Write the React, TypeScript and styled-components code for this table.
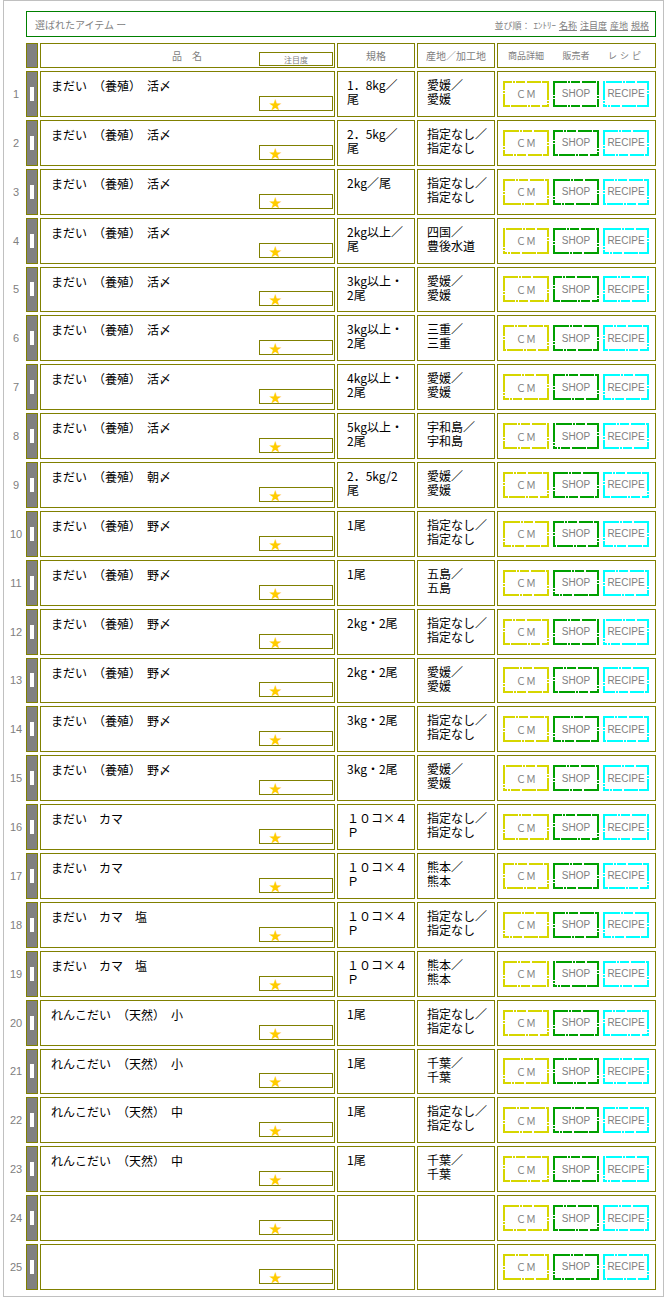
import styled, { createGlobalStyle } from 'styled-components';

const OLIVE = '#808000';
const GREY = '#808080';
const JP = "'Noto Sans CJK JP', 'Liberation Sans', sans-serif";
const LATIN = "'Liberation Sans', Arial, sans-serif";

type Item = {
  name: string;
  spec: string;
  origin: string;
};

const items: Item[] = [
  { name: 'まだい　（養殖）　活〆', spec: '1．8kg／\n尾', origin: '愛媛／\n愛媛' },
  { name: 'まだい　（養殖）　活〆', spec: '2．5kg／\n尾', origin: '指定なし／\n指定なし' },
  { name: 'まだい　（養殖）　活〆', spec: '2kg／尾', origin: '指定なし／\n指定なし' },
  { name: 'まだい　（養殖）　活〆', spec: '2kg以上／\n尾', origin: '四国／\n豊後水道' },
  { name: 'まだい　（養殖）　活〆', spec: '3kg以上・\n2尾', origin: '愛媛／\n愛媛' },
  { name: 'まだい　（養殖）　活〆', spec: '3kg以上・\n2尾', origin: '三重／\n三重' },
  { name: 'まだい　（養殖）　活〆', spec: '4kg以上・\n2尾', origin: '愛媛／\n愛媛' },
  { name: 'まだい　（養殖）　活〆', spec: '5kg以上・\n2尾', origin: '宇和島／\n宇和島' },
  { name: 'まだい　（養殖）　朝〆', spec: '2．5kg/2\n尾', origin: '愛媛／\n愛媛' },
  { name: 'まだい　（養殖）　野〆', spec: '1尾', origin: '指定なし／\n指定なし' },
  { name: 'まだい　（養殖）　野〆', spec: '1尾', origin: '五島／\n五島' },
  { name: 'まだい　（養殖）　野〆', spec: '2kg・2尾', origin: '指定なし／\n指定なし' },
  { name: 'まだい　（養殖）　野〆', spec: '2kg・2尾', origin: '愛媛／\n愛媛' },
  { name: 'まだい　（養殖）　野〆', spec: '3kg・2尾', origin: '指定なし／\n指定なし' },
  { name: 'まだい　（養殖）　野〆', spec: '3kg・2尾', origin: '愛媛／\n愛媛' },
  { name: 'まだい　カマ', spec: '１０コ×４\nＰ', origin: '指定なし／\n指定なし' },
  { name: 'まだい　カマ', spec: '１０コ×４\nＰ', origin: '熊本／\n熊本' },
  { name: 'まだい　カマ　塩', spec: '１０コ×４\nＰ', origin: '指定なし／\n指定なし' },
  { name: 'まだい　カマ　塩', spec: '１０コ×４\nＰ', origin: '熊本／\n熊本' },
  { name: 'れんこだい　（天然）　小', spec: '1尾', origin: '指定なし／\n指定なし' },
  { name: 'れんこだい　（天然）　小', spec: '1尾', origin: '千葉／\n千葉' },
  { name: 'れんこだい　（天然）　中', spec: '1尾', origin: '指定なし／\n指定なし' },
  { name: 'れんこだい　（天然）　中', spec: '1尾', origin: '千葉／\n千葉' },
  { name: '', spec: '', origin: '' },
  { name: '', spec: '', origin: '' },
];

const buttons = [
  { label: 'ＣＭ', color: '#d6d600', font: JP },
  { label: 'SHOP', color: '#00a000', font: LATIN },
  { label: 'RECIPE', color: '#00ffff', font: LATIN },
];

// hand-drawn look of the old gif borders: mostly solid, a few breaks
const dash = (c: string, deg: number) =>
  `repeating-linear-gradient(${deg}deg, ${c} 0 14px, transparent 14px 15px, ${c} 15px 17px, transparent 17px 18px, ${c} 18px 27px, transparent 27px 29px)`;

const GlobalStyle = createGlobalStyle`
  body {
    margin: 0;
    background: #ffffff;
    font-family: ${JP};
  }
`;

const StyledFrame = styled.div`
  box-sizing: border-box;
  width: 661px;
  margin-left: 3px;
  padding: 10px 6px 6px 0;
  border: 1px solid #c0c0c0;
`;

const StyledTitleBar = styled.div`
  box-sizing: border-box;
  display: flex;
  align-items: center;
  justify-content: space-between;
  width: 630px;
  height: 26px;
  margin: 0 0 6px 22px;
  padding: 0 6px 0 8px;
  border: 1px solid #008000;
`;
const StyledTitle = styled.span`
  font-size: 10px;
  color: ${GREY};
`;
const StyledSort = styled.div`
  display: flex;
  gap: 3px;
  margin-top: 3px;
  font-size: 9px;
  color: ${GREY};
`;
const StyledSortLink = styled.a`
  color: ${GREY};
  text-decoration: underline;
`;

const StyledTable = styled.div`
  display: flex;
  flex-direction: column;
  gap: 3px;
`;
const StyledRow = styled.div<{ $head?: boolean }>`
  display: grid;
  grid-template-columns: 20px 12px 295px 78px 78px 159px;
  column-gap: 2px;
  height: ${({ $head }) => ($head ? '25px' : '45.88px')};
`;
const StyledNo = styled.div`
  display: flex;
  align-items: center;
  justify-content: center;
  padding-left: 4px;
  font: 11px ${LATIN};
  color: ${GREY};
`;
const StyledCell = styled.div`
  box-sizing: border-box;
  min-width: 0;
  border: 1px solid ${OLIVE};
`;
const StyledMarker = styled(StyledCell)`
  display: flex;
  align-items: center;
  justify-content: center;
  background: ${GREY};
`;
const StyledMarkerBar = styled.span`
  width: 4px;
  height: 14px;
  background: #ffffff;
`;

const StyledHeadName = styled(StyledCell)`
  display: grid;
  grid-template-columns: 1fr auto 1fr;
  align-items: center;
  padding: 0 1px 1px 0;
`;
const StyledHeadText = styled.span`
  font-size: 10px;
  color: ${GREY};
  white-space: nowrap;
`;
const StyledHeadCell = styled(StyledCell)`
  display: flex;
  align-items: center;
  justify-content: center;
`;
const StyledAttentionBox = styled.div`
  box-sizing: border-box;
  justify-self: end;
  align-self: end;
  display: flex;
  align-items: center;
  justify-content: center;
  width: 74px;
  height: 14px;
  border: 1px solid ${OLIVE};
  font-size: 8px;
  color: ${GREY};
`;

const StyledNameCell = styled(StyledCell)`
  display: flex;
  flex-direction: column;
  padding: 7px 1px 5px 10px;
`;
const StyledText = styled.div`
  font-size: 12px;
  line-height: 14px;
  color: #000000;
  white-space: pre;
`;
const StyledStarBox = styled.div`
  box-sizing: border-box;
  display: flex;
  align-items: flex-end;
  align-self: flex-end;
  width: 74px;
  height: 15px;
  margin-top: auto;
  padding-left: 9px;
  border: 1px solid ${OLIVE};
`;
const StyledStar = styled.span`
  font-size: 13px;
  line-height: 12px;
  color: #ffcc00;
`;
const StyledTextCell = styled(StyledCell)`
  padding: 6px 2px 0 9px;
`;

const StyledButtonCell = styled(StyledCell)`
  display: flex;
  align-items: center;
  gap: 4px;
  padding-left: 5px;
`;
const StyledButtonLabel = styled.span`
  width: 46px;
  text-align: center;
  font-size: 9px;
  color: ${GREY};
  white-space: nowrap;
  &:last-child {
    letter-spacing: 3px;
  }
`;
const StyledLinkButton = styled.span<{ $color: string; $shift: number; $font: string }>`
  box-sizing: border-box;
  display: flex;
  align-items: center;
  justify-content: center;
  width: 46px;
  height: 26px;
  font: 10px ${({ $font }) => $font};
  color: ${GREY};
  background-image: ${({ $color }) =>
    `${dash($color, 90)}, ${dash($color, 90)}, ${dash($color, 180)}, ${dash($color, 180)}`};
  background-size: 100% 2px, 100% 2px, 2px 100%, 2px 100%;
  background-repeat: repeat-x, repeat-x, repeat-y, repeat-y;
  background-position: ${({ $shift }) =>
    `${$shift}px 0, ${-$shift * 2}px 100%, 0 ${$shift}px, 100% ${-$shift}px`};
`;

export default function App() {
  return (
    <>
      <GlobalStyle />
      <StyledFrame>
        <StyledTitleBar>
          <StyledTitle>選ばれたアイテム ー</StyledTitle>
          <StyledSort>
            <span>並び順：</span>
            <span>ｴﾝﾄﾘｰ</span>
            <StyledSortLink>名称</StyledSortLink>
            <StyledSortLink>注目度</StyledSortLink>
            <StyledSortLink>産地</StyledSortLink>
            <StyledSortLink>規格</StyledSortLink>
          </StyledSort>
        </StyledTitleBar>
        <StyledTable>
          <StyledRow $head>
            <StyledNo />
            <StyledMarker />
            <StyledHeadName>
              <span />
              <StyledHeadText>品　名</StyledHeadText>
              <StyledAttentionBox>注目度</StyledAttentionBox>
            </StyledHeadName>
            <StyledHeadCell>
              <StyledHeadText>規格</StyledHeadText>
            </StyledHeadCell>
            <StyledHeadCell>
              <StyledHeadText>産地／加工地</StyledHeadText>
            </StyledHeadCell>
            <StyledButtonCell>
              <StyledButtonLabel>商品詳細</StyledButtonLabel>
              <StyledButtonLabel>販売者</StyledButtonLabel>
              <StyledButtonLabel>レシピ</StyledButtonLabel>
            </StyledButtonCell>
          </StyledRow>
          {items.map((item, i) => (
            <StyledRow key={i}>
              <StyledNo>{i + 1}</StyledNo>
              <StyledMarker>
                <StyledMarkerBar />
              </StyledMarker>
              <StyledNameCell>
                <StyledText>{item.name}</StyledText>
                <StyledStarBox>
                  <StyledStar>★</StyledStar>
                </StyledStarBox>
              </StyledNameCell>
              <StyledTextCell>
                <StyledText>{item.spec}</StyledText>
              </StyledTextCell>
              <StyledTextCell>
                <StyledText>{item.origin}</StyledText>
              </StyledTextCell>
              <StyledButtonCell>
                {buttons.map((b, j) => (
                  <StyledLinkButton
                    key={b.label}
                    $color={b.color}
                    $font={b.font}
                    $shift={((i * 7 + j * 5) % 11) - 5}
                  >
                    {b.label}
                  </StyledLinkButton>
                ))}
              </StyledButtonCell>
            </StyledRow>
          ))}
        </StyledTable>
      </StyledFrame>
    </>
  );
}
